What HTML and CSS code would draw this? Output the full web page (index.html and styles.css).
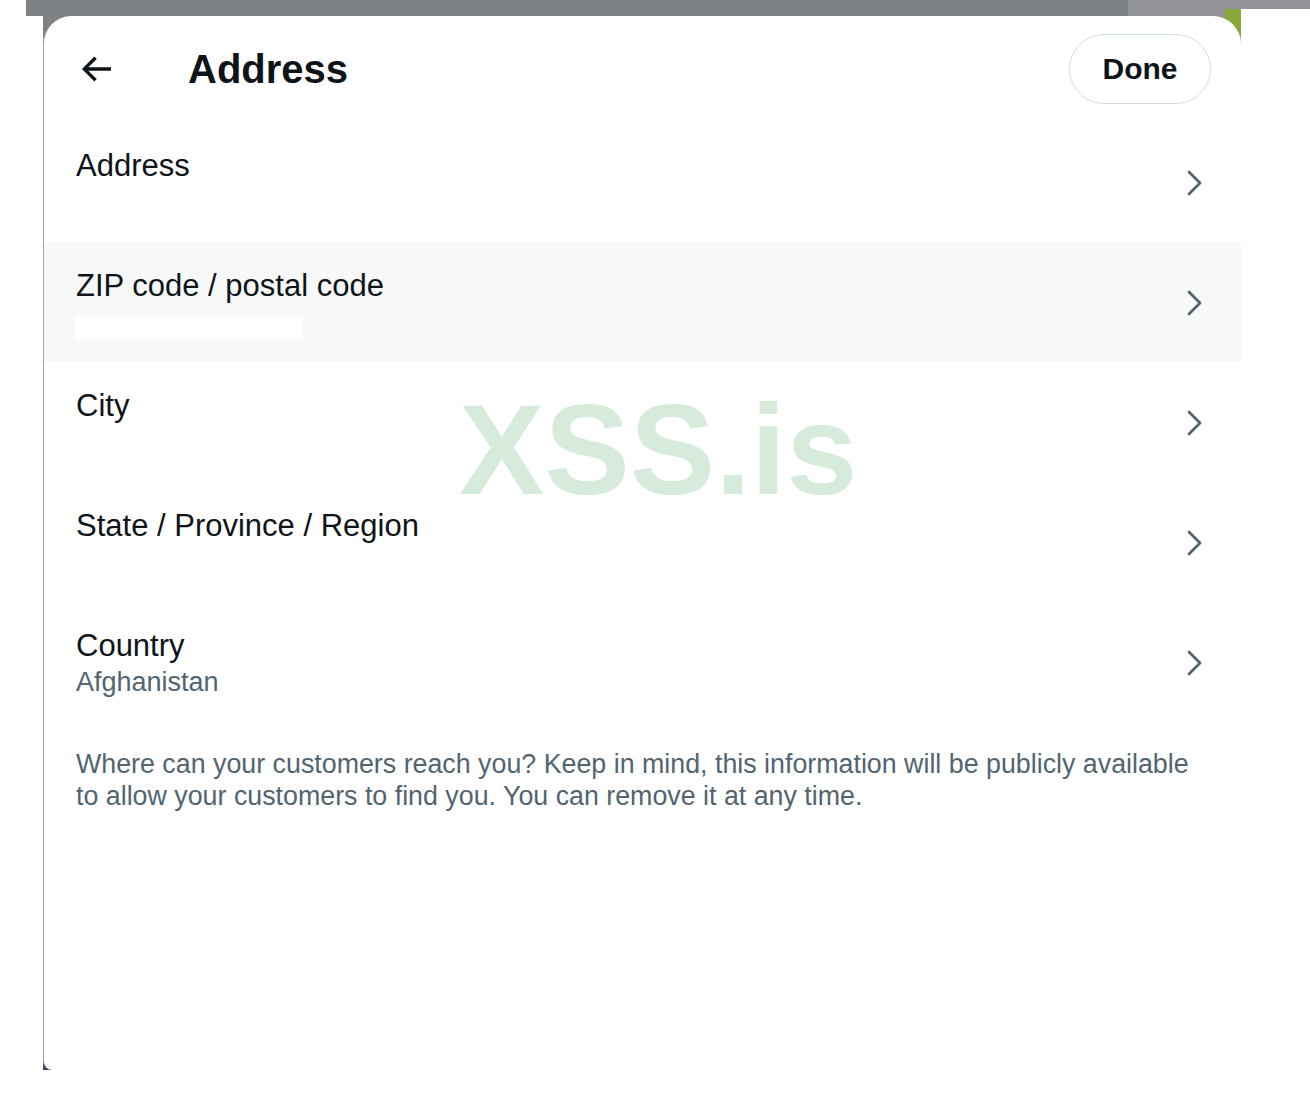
FILE: index.html
```html
<!DOCTYPE html>
<html lang="en">
<head>
<meta charset="utf-8">
<title>Address</title>
<link rel="stylesheet" href="styles.css">
</head>
<body>
<div class="backdrop">
  <div class="modal">
    <header class="modal-header">
      <button class="back" aria-label="Back">
        <svg viewBox="0 0 24 24" width="40" height="40"><path d="M7.414 13l5.043 5.04-1.414 1.42L3.586 12l7.457-7.46 1.414 1.42L7.414 11H21v2H7.414z" fill="#0f1419"/></svg>
      </button>
      <h1 class="title">Address</h1>
      <button class="done">Done</button>
    </header>

    <div class="rows">
      <div class="row">
        <div class="row-text"><div class="label">Address</div></div>
        <svg class="chev" viewBox="0 0 18 28" width="18" height="28"><polyline points="3,3 14,14 3,25"/></svg>
      </div>
      <div class="row row-hover">
        <div class="row-text">
          <div class="label">ZIP code / postal code</div>
          <div class="redact"></div>
        </div>
        <svg class="chev" viewBox="0 0 18 28" width="18" height="28"><polyline points="3,3 14,14 3,25"/></svg>
      </div>
      <div class="row">
        <div class="row-text"><div class="label">City</div></div>
        <svg class="chev" viewBox="0 0 18 28" width="18" height="28"><polyline points="3,3 14,14 3,25"/></svg>
      </div>
      <div class="row">
        <div class="row-text"><div class="label">State / Province / Region</div></div>
        <svg class="chev" viewBox="0 0 18 28" width="18" height="28"><polyline points="3,3 14,14 3,25"/></svg>
      </div>
      <div class="row">
        <div class="row-text">
          <div class="label">Country</div>
          <div class="value">Afghanistan</div>
        </div>
        <svg class="chev" viewBox="0 0 18 28" width="18" height="28"><polyline points="3,3 14,14 3,25"/></svg>
      </div>
    </div>

    <p class="note">Where can your customers reach you? Keep in mind, this information will be publicly available to allow your customers to find you. You can remove it at any time.</p>

    <div class="watermark">XSS.is</div>
  </div>
</div>
</body>
</html>
```

FILE: styles.css
```css
* { box-sizing: border-box; }

html, body {
  margin: 0;
  padding: 0;
}

body {
  width: 1310px;
  height: 1100px;
  overflow: hidden;
  font-family: "Liberation Sans", Arial, sans-serif;
  color: #0f1419;
  background:
    linear-gradient(#939598, #939598) right top / 69px 9px no-repeat,
    #ffffff;
}

.backdrop {
  margin-left: 26px;
  width: 1215px;
  padding: 16px 0 0 17px;
  background:
    linear-gradient(#8aa83a, #8aa83a) right 0 top 9px / 16px 26px no-repeat,
    linear-gradient(to right, #7f8285 0 1102px, #939598 1102px) left top / 100% 16px no-repeat,
    linear-gradient(#7f8285, #7f8285) left 17px top / 40px 50px no-repeat,
    linear-gradient(#939598, #939598) right top / 40px 50px no-repeat,
    linear-gradient(#4b3c64, #4b3c64) left 17px bottom / 12px 40px no-repeat,
    #ffffff;
}

.modal {
  position: relative;
  width: 1198px;
  height: 1054px;
  background: #ffffff;
  border-left: 1px solid #a3a3a3;
  border-radius: 28px 28px 0 9px;
  overflow: hidden;
}

.modal-header {
  height: 106px;
  display: flex;
  align-items: center;
  padding: 0 30px 0 32px;
}

.back {
  width: 40px;
  height: 40px;
  padding: 0;
  border: 0;
  background: none;
  display: flex;
}

.title {
  margin: 0 0 0 72px;
  font-size: 40px;
  font-weight: 700;
  line-height: 48px;
  flex: 1;
}

.done {
  width: 142px;
  height: 70px;
  border: 1.5px solid #cfe2d3;
  border-radius: 35px;
  background: #ffffff;
  color: #0f1419;
  font-family: "Liberation Sans", Arial, sans-serif;
  font-size: 30px;
  font-weight: 700;
  padding: 0;
}

.rows {
  display: flex;
  flex-direction: column;
}

.row {
  height: 120px;
  display: flex;
  align-items: center;
  padding: 0 37px 0 32px;
}

.row-hover {
  background: #f7f9f9;
}

.row-text {
  flex: 1;
  align-self: flex-start;
  padding-top: 24px;
}

.label {
  font-size: 31px;
  line-height: 40px;
  color: #0f1419;
}

.value {
  font-size: 27px;
  line-height: 32px;
  color: #536471;
}

.redact {
  width: 229px;
  height: 24px;
  margin: 10px 0 0 -2px;
  background: #ffffff;
}

.chev {
  fill: none;
  stroke: #536471;
  stroke-width: 2.8;
  stroke-linecap: round;
  stroke-linejoin: round;
  margin-top: 1px;
}

.note {
  margin: 26px 37px 0 32px;
  font-size: 26.8px;
  line-height: 32px;
  color: #536471;
}

.watermark {
  position: absolute;
  left: 415px;
  top: 370px;
  font-size: 128px;
  font-weight: 700;
  line-height: 128px;
  color: rgba(120, 190, 135, 0.3);
  pointer-events: none;
  white-space: nowrap;
}
```
